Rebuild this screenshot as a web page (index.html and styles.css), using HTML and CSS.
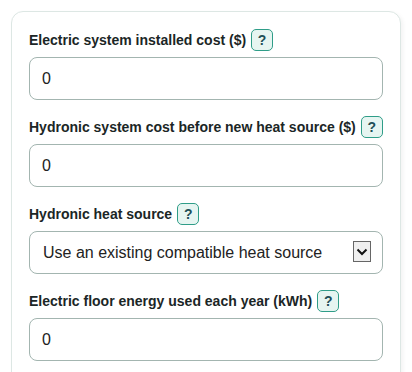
FILE: index.html
```html
<!DOCTYPE html>
<html lang="en">
<head>
    <meta charset="UTF-8">
    <meta name="viewport" content="width=device-width, initial-scale=1.0">
    <title>Heating Cost Inputs</title>
    <link rel="stylesheet" href="styles.css">
</head>
<body>
    <div class="card">
        <div class="field">
            <div class="label-row">
                <label for="elec-cost">Electric system installed cost ($)</label>
                <button class="help" type="button">?</button>
            </div>
            <input id="elec-cost" class="text-input" type="text" value="0">
        </div>

        <div class="field">
            <div class="label-row">
                <label for="hydro-cost">Hydronic system cost before new heat source ($)</label>
                <button class="help" type="button">?</button>
            </div>
            <input id="hydro-cost" class="text-input" type="text" value="0">
        </div>

        <div class="field">
            <div class="label-row">
                <label for="heat-source">Hydronic heat source</label>
                <button class="help" type="button">?</button>
            </div>
            <div class="select-wrap">
                <select id="heat-source" class="text-input select">
                    <option>Use an existing compatible heat source</option>
                    <option>Install a new heat pump</option>
                    <option>Install a new boiler</option>
                </select>
                <span class="select-arrow">
                    <svg width="12" height="8" viewBox="0 0 12 8">
                        <path d="M1.5 1.5 L6 6 L10.5 1.5" fill="none" stroke="#111" stroke-width="2"/>
                    </svg>
                </span>
            </div>
        </div>

        <div class="field">
            <div class="label-row">
                <label for="floor-energy">Electric floor energy used each year (kWh)</label>
                <button class="help" type="button">?</button>
            </div>
            <input id="floor-energy" class="text-input" type="text" value="0">
        </div>
    </div>
</body>
</html>
```

FILE: styles.css
```css
body {
    margin: 0;
    padding: 11px;
    font-family: "Liberation Sans", Arial, sans-serif;
    background: #fff;
    color: #1b2626;
}
.card {
    width: 354px;
    padding: 17px 17px 40px 17px;
    border: 1px solid #dde7e4;
    border-radius: 12px;
    box-shadow: 2px 2px 4px rgba(0, 0, 0, 0.05);
    background: #fff;
}
.field {
    margin-bottom: 16px;
}
.label-row {
    display: flex;
    align-items: center;
    gap: 5px;
    height: 22px;
    margin-bottom: 6px;
}
.label-row label {
    font-size: 14px;
    font-weight: bold;
    color: #1b2626;
}
.help {
    width: 22px;
    height: 22px;
    padding: 0;
    border: 1px solid #2f9d88;
    border-radius: 5px;
    background: #e6f5f1;
    color: #1f4f57;
    font-family: "Liberation Sans", Arial, sans-serif;
    font-size: 14px;
    font-weight: bold;
    cursor: pointer;
}
.text-input {
    display: block;
    box-sizing: border-box;
    width: 100%;
    height: 43px;
    padding: 0 12px;
    border: 1px solid #a3b5b0;
    border-radius: 8px;
    background: #fff;
    color: #222;
    font-family: "Liberation Sans", Arial, sans-serif;
    font-size: 16px;
}
.select-wrap {
    position: relative;
}
.select {
    appearance: none;
    -webkit-appearance: none;
    padding-left: 13px;
}
.select-arrow {
    position: absolute;
    right: 12px;
    top: 10px;
    width: 18px;
    height: 21px;
    box-sizing: border-box;
    border: 1px solid #666;
    background: #efefef;
    display: flex;
    align-items: center;
    justify-content: center;
    pointer-events: none;
}
```
